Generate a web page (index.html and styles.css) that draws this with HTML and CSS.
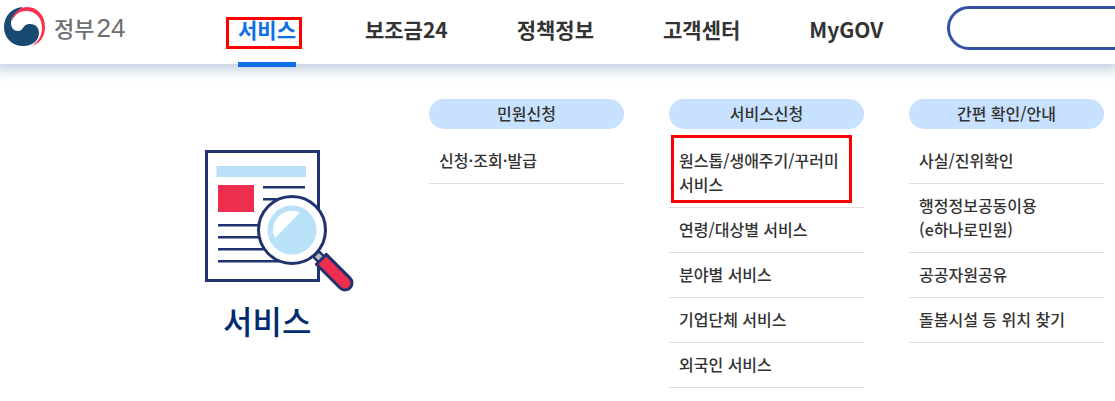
FILE: index.html
```html
<!DOCTYPE html>
<html lang="ko">
<head>
  <meta charset="UTF-8" />
  <meta name="viewport" content="width=device-width, initial-scale=1.0" />
  <title>정부24</title>
  <link rel="stylesheet" href="styles.css">
</head>
<body>
  <header class="header">
    <a class="logo" href="#" aria-label="정부24">
      <svg class="logo-mark" viewBox="0 0 42 42" aria-hidden="true">
        <path fill="#184a73" d="M18 1C8 2 0 10 0 21C0 33 9 40 19 40C29 40 35 34 35 27C35 21 31 18 26 18C18 18 20 25 14 25C10 25 7 22 7 17C7 11 12 6 18 4Z"/>
        <path fill="#fb3350" d="M7 17C9 6 16 1 23 1C34 1 41 10 41 21C41 31 36 37 28 40C35 35 38 29 38 22C38 11 31 5 22 5C15 5 10 9 7 17Z"/>
      </svg>
      <span class="logo-text">정부<span class="logo-num">24</span></span>
    </a>
    <nav class="nav">
      <a class="nav-link active" href="#">서비스</a>
      <a class="nav-link" href="#">보조금24</a>
      <a class="nav-link" href="#">정책정보</a>
      <a class="nav-link" href="#">고객센터</a>
      <a class="nav-link" href="#">MyGOV</a>
    </nav>
    <input class="search" type="search" aria-label="검색어" />
  </header>

  <main class="menu">
    <section class="intro">
      <svg class="intro-icon" viewBox="0 0 149 142" aria-hidden="true">
        <rect x="1.5" y="1.5" width="112" height="129" fill="#fff" stroke="#21336f" stroke-width="3"/>
        <rect x="11.5" y="16" width="89.5" height="11" fill="#b9e1f8"/>
        <rect x="13" y="35" width="36" height="27" fill="#ee2e4f"/>
        <path d="M58 37.3H100M58 49.3H100M13 75.3H100M13 87.3H100M13 99.3H100M13 111.3H84" stroke="#21336f" stroke-width="2.4"/>
        <g transform="translate(87 80) rotate(45)">
          <rect x="34" y="-4" width="9" height="8" fill="#b9bcc4" stroke="#21336f" stroke-width="2.4"/>
          <path d="M41.5 -7H75a7 7 0 0 1 0 14H41.5Z" fill="#ee2e4f" stroke="#21336f" stroke-width="3" stroke-linejoin="round"/>
        </g>
        <circle cx="87" cy="80" r="33.5" fill="#fff" stroke="#21336f" stroke-width="3"/>
        <circle cx="87" cy="80" r="24.5" fill="#b9e1f8"/>
        <path d="M95 62.5A19 19 0 0 0 70 88Z" fill="#fff"/>
      </svg>
      <h2 class="intro-title">서비스</h2>
    </section>

    <section class="group">
      <h3 class="group-title">민원신청</h3>
      <ul class="list">
        <li><a href="#">신청·조회·발급</a></li>
      </ul>
    </section>

    <section class="group">
      <h3 class="group-title">서비스신청</h3>
      <ul class="list">
        <li class="marked"><a href="#">원스톱/생애주기/꾸러미 서비스</a></li>
        <li><a href="#">연령/대상별 서비스</a></li>
        <li><a href="#">분야별 서비스</a></li>
        <li><a href="#">기업단체 서비스</a></li>
        <li><a href="#">외국인 서비스</a></li>
      </ul>
    </section>

    <section class="group">
      <h3 class="group-title">간편 확인/안내</h3>
      <ul class="list">
        <li><a href="#">사실/진위확인</a></li>
        <li><a href="#">행정정보공동이용<br>(e하나로민원)</a></li>
        <li><a href="#">공공자원공유</a></li>
        <li><a href="#">돌봄시설 등 위치 찾기</a></li>
      </ul>
    </section>
  </main>
</body>
</html>
```

FILE: styles.css
```css
*,
*::before,
*::after {
  box-sizing: border-box;
}

body {
  margin: 0;
  font-family: "Noto Sans CJK KR", sans-serif;
  font-size: 16px;
  line-height: 24px;
  color: #333;
  background: #fff;
  overflow-x: hidden;
}

a {
  color: inherit;
  text-decoration: none;
}

/* 상단 메뉴 */
.header {
  display: flex;
  height: 64px;
  padding-left: 4px;
  box-shadow: 0 2px 12px 4px #c3cee0;
}

.logo {
  display: flex;
  flex: none;
  align-items: center;
  gap: 8px;
  width: 234px;
  height: 54px;
  color: #6d6e71;
}

.logo-mark {
  width: 42px;
  height: 42px;
}

.logo-text {
  font-size: 22px;
  font-weight: 500;
}

.logo-num {
  margin-left: 2px;
  font-family: "Liberation Sans", sans-serif;
  font-size: 26px;
  font-weight: 400;
}

.nav {
  display: flex;
  flex: none;
  gap: 69px;
}

.nav-link {
  position: relative;
  font-size: 21px;
  font-weight: 700;
  line-height: 58px;
}

.active {
  color: #0f70e6;
}

.active::before {
  content: "";
  position: absolute;
  left: 0;
  right: 0;
  bottom: -3px;
  height: 5px;
  background: #0f70e6;
}

.active::after {
  content: "";
  position: absolute;
  top: 17px;
  left: -12px;
  right: -6px;
  height: 32px;
  border: 3px solid #f00;
}

.search {
  flex: 1;
  min-width: 0;
  height: 44px;
  margin: 6px -30px 0 64px;
  padding: 0 20px;
  border: 3px solid #3352a5;
  border-radius: 22px;
  background: #fff;
  font: inherit;
}

/* 펼침 메뉴 */
.menu {
  display: grid;
  grid-template-columns: 1fr repeat(3, 195px);
  column-gap: 45px;
  padding: 35px 11px 13px 205px;
}

.intro {
  padding-top: 51px;
}

.intro-icon {
  display: block;
  width: 149px;
  height: 142px;
}

.intro-title {
  margin: 8px 0 0 18px;
  font-size: 32px;
  font-weight: 500;
  line-height: 40px;
  color: #002b6e;
}

.group-title {
  margin: 0 0 10px;
  padding-bottom: 2px;
  border-radius: 15px;
  background: #c8e1ff;
  font-size: 16px;
  font-weight: 500;
  line-height: 28px;
  text-align: center;
}

.list {
  margin: 0;
  padding: 0;
  list-style: none;
}

.list li {
  position: relative;
  padding: 9px 10px 11px;
  border-bottom: 1px solid #ddd;
  font-weight: 500;
}

.marked::after {
  content: "";
  position: absolute;
  inset: -4px 12px 4px 2px;
  border: 3px solid #f00;
}
```
